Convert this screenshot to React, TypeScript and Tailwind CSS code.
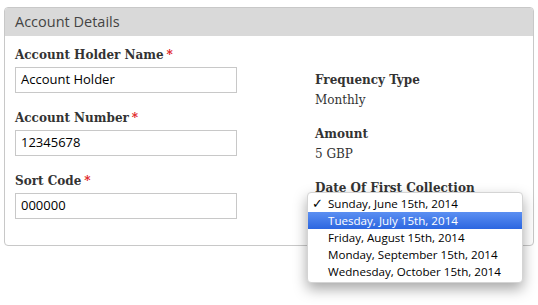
const fields = [
  { label: "Account Holder Name", value: "Account Holder" },
  { label: "Account Number", value: "12345678" },
  { label: "Sort Code", value: "000000" },
];

const details = [
  { label: "Frequency Type", value: "Monthly" },
  { label: "Amount", value: "5 GBP" },
];

const dates = [
  "Sunday, June 15th, 2014",
  "Tuesday, July 15th, 2014",
  "Friday, August 15th, 2014",
  "Monday, September 15th, 2014",
  "Wednesday, October 15th, 2014",
];

export default function App() {
  return (
    <div className="w-[538px] h-[305px] bg-white pt-[7px] pl-[4px] overflow-hidden">
      <div className="w-[530px] border border-[#c8c8c8] rounded-[4px]">
        <div className="h-[28px] bg-[#d9d9d9] rounded-t-[3px] pl-[10px] flex items-center text-[14.5px] text-[#444] font-['Open_Sans',sans-serif]">
          Account Details
        </div>

        <div className="flex pl-[10px] pt-[10px] pb-[26px] font-['DejaVu_Serif',serif] text-[#333]">
          <div className="w-[222px] flex flex-col">
            {fields.map((f, i) => (
              <div key={f.label} className={i === 0 ? "" : "mt-[16px]"}>
                <div className="h-[18px] leading-[18px] text-[12px] font-bold mb-[3px]">
                  {f.label}
                  <span className="text-[#e0201b] ml-[3px]">*</span>
                </div>
                <div className="h-[26px] border border-[#c8c8c8] pl-[5px] flex items-center text-[13px] text-black font-['Open_Sans',sans-serif]">
                  {f.value}
                </div>
              </div>
            ))}
          </div>

          <div className="ml-[78px] pt-[24px] flex flex-col">
            {details.map((d) => (
              <div key={d.label} className="mb-[14px]">
                <div className="h-[20px] leading-[20px] text-[12px] font-bold">{d.label}</div>
                <div className="h-[20px] leading-[20px] text-[12px]">{d.value}</div>
              </div>
            ))}
            <div className="relative">
              <div className="h-[20px] leading-[20px] text-[12px] font-bold">Date Of First Collection</div>
              <div className="absolute left-[-8px] top-[14px] w-[216px] bg-white rounded-[4px] border border-[#d4d4d4] py-[2px] shadow-[0_6px_14px_rgba(0,0,0,0.35)] font-['Open_Sans',sans-serif] text-[11.6px] text-black">
                {dates.map((d, i) => (
                  <div
                    key={d}
                    className={
                      "h-[17px] leading-[17px] flex items-center " +
                      (i === 1 ? "bg-gradient-to-b from-[#5b8ff2] to-[#2c66e0] text-white" : "")
                    }
                  >
                    <span className="w-[20px] pl-[4px] text-[13px]">{i === 0 ? "✓" : ""}</span>
                    <span>{d}</span>
                  </div>
                ))}
              </div>
            </div>
          </div>
        </div>
      </div>
    </div>
  );
}
